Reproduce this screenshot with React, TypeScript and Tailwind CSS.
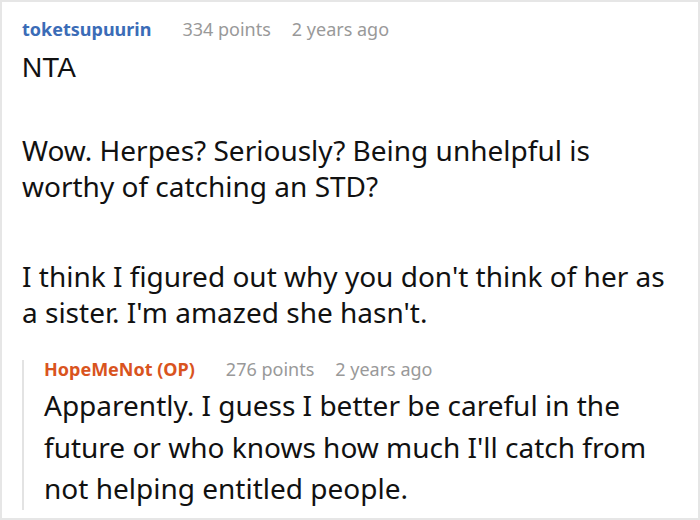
import React from 'react'

const Meta = ({ name, points, color }: { name: string; points: string; color: string }) => (
  <div className="flex items-baseline text-[18px] leading-none">
    <span className={`font-bold ${color}`}>{name}</span>
    <span className="ml-[31px] text-[#999999]">{points}</span>
    <span className="ml-[21px] text-[#999999]">2 years ago</span>
  </div>
)

export default function App() {
  return (
    <div
      className="h-[520px] w-[700px] overflow-hidden border-2 border-[#e6e6e6] bg-white text-[#111111]"
      style={{ fontFamily: '"Noto Sans", sans-serif' }}
    >
      <div className="pl-[20px] pt-[18px]">
        <Meta name="toketsupuurin" points="334 points" color="text-[#3b6cb7]" />
        <p className="mt-[16px] text-[28px] leading-none" style={{ fontFamily: '"Liberation Sans", sans-serif' }}>
          NTA
        </p>
        <div className="mt-[50px] text-[28px] leading-[36px]">
          <p>Wow. Herpes? Seriously? Being unhelpful is</p>
          <p>worthy of catching an STD?</p>
          <p className="mt-[54px]">I think I figured out why you don't think of her as</p>
          <p>a sister. I'm amazed she hasn't.</p>
        </div>
        <div className="mt-[36px] border-l-2 border-[#e3e3e3] pl-[20px]">
          <div className="-mt-[6px]">
            <Meta name="HopeMeNot (OP)" points="276 points" color="text-[#d9541e]" />
          </div>
          <div className="mt-[7px] text-[28px] leading-[41.5px]">
            <p>Apparently. I guess I better be careful in the</p>
            <p>future or who knows how much I'll catch from</p>
            <p>not helping entitled people.</p>
          </div>
        </div>
      </div>
    </div>
  )
}
